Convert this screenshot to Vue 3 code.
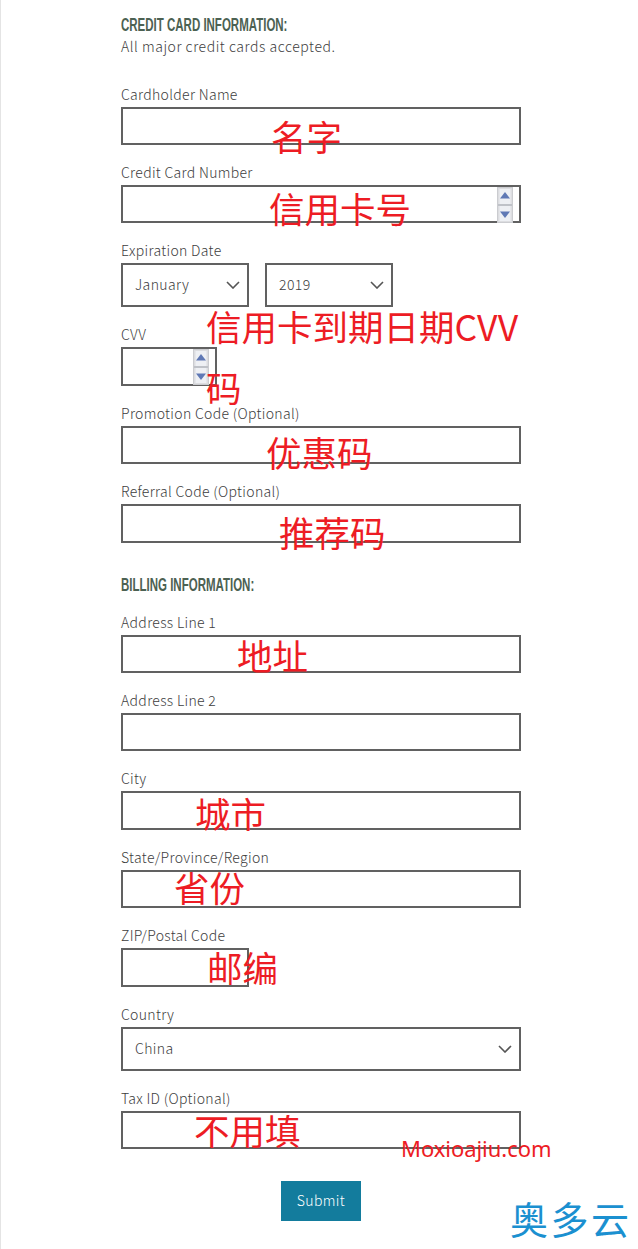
<script setup>
const months = ['January']
const notes = [
  { text: '名字', x: 270, y: 118 },
  { text: '信用卡号', x: 268, y: 190 },
  { text: '信用卡到期日期CVV', x: 205, y: 308 },
  { text: '码', x: 205, y: 369 },
  { text: '优惠码', x: 265, y: 434 },
  { text: '推荐码', x: 278, y: 514 },
  { text: '地址', x: 236, y: 637 },
  { text: '城市', x: 194, y: 795 },
  { text: '省份', x: 173, y: 869 },
  { text: '邮编', x: 206, y: 949 },
  { text: '不用填', x: 193, y: 1112 },
]
</script>

<template>
  <div class="page">
    <form class="form" @submit.prevent>
      <h2 class="heading">Credit Card Information:</h2>
      <p class="hint">All major credit cards accepted.</p>

      <div class="field">
        <label>Cardholder Name</label>
        <input type="text" />
      </div>
      <div class="field">
        <label>Credit Card Number</label>
        <div class="spin-wrap">
          <input type="text" />
          <svg class="spinner" viewBox="0 0 16 36">
            <rect x="0.5" y="0.5" width="15" height="35" fill="#dcdde0" stroke="#cbccd0" />
            <rect x="2.5" y="2" width="11" height="15" fill="#eef0f4" />
            <rect x="2.5" y="19" width="11" height="15" fill="#eef0f4" />
            <rect x="1" y="17" width="14" height="2" fill="#bfc2c8" />
            <path d="M8 5 L13 11.5 H3 Z" fill="#6079b5" />
            <path d="M8 31 L13 24.5 H3 Z" fill="#6079b5" />
          </svg>
        </div>
      </div>
      <div class="field">
        <label>Expiration Date</label>
        <div class="date-row">
          <div class="select-wrap small">
            <select>
              <option v-for="m in months" :key="m">{{ m }}</option>
            </select>
            <svg class="chevron" viewBox="0 0 14 8"><path d="M1 1 L7 7 L13 1" /></svg>
          </div>
          <div class="select-wrap small">
            <select>
              <option>2019</option>
            </select>
            <svg class="chevron" viewBox="0 0 14 8"><path d="M1 1 L7 7 L13 1" /></svg>
          </div>
        </div>
      </div>
      <div class="field">
        <label>CVV</label>
        <div class="spin-wrap cvv">
          <input type="text" />
          <svg class="spinner" viewBox="0 0 16 36">
            <rect x="0.5" y="0.5" width="15" height="35" fill="#dcdde0" stroke="#cbccd0" />
            <rect x="2.5" y="2" width="11" height="15" fill="#eef0f4" />
            <rect x="2.5" y="19" width="11" height="15" fill="#eef0f4" />
            <rect x="1" y="17" width="14" height="2" fill="#bfc2c8" />
            <path d="M8 5 L13 11.5 H3 Z" fill="#6079b5" />
            <path d="M8 31 L13 24.5 H3 Z" fill="#6079b5" />
          </svg>
        </div>
      </div>
      <div class="field">
        <label>Promotion Code (Optional)</label>
        <input type="text" />
      </div>
      <div class="field">
        <label>Referral Code (Optional)</label>
        <input type="text" />
      </div>

      <h2 class="heading second">Billing Information:</h2>

      <div class="field">
        <label>Address Line 1</label>
        <input type="text" />
      </div>
      <div class="field">
        <label>Address Line 2</label>
        <input type="text" />
      </div>
      <div class="field">
        <label>City</label>
        <input type="text" />
      </div>
      <div class="field">
        <label>State/Province/Region</label>
        <input type="text" />
      </div>
      <div class="field">
        <label>ZIP/Postal Code</label>
        <input class="zip" type="text" />
      </div>
      <div class="field">
        <label>Country</label>
        <div class="select-wrap">
          <select>
            <option>China</option>
          </select>
          <svg class="chevron" viewBox="0 0 14 8"><path d="M1 1 L7 7 L13 1" /></svg>
        </div>
      </div>
      <div class="field">
        <label>Tax ID (Optional)</label>
        <input type="text" />
      </div>

      <div class="actions">
        <button type="submit">Submit</button>
      </div>
    </form>

    <span
      v-for="n in notes"
      :key="n.text"
      class="note"
      :style="{ left: n.x + 'px', top: n.y + 'px' }"
    >{{ n.text }}</span>
    <span class="mark-site">Moxioajiu.com</span>
    <span class="mark-logo">奥多云</span>
  </div>
</template>

<style>
html,
body {
  margin: 0;
  background: #fff;
}
</style>

<style scoped>
.page {
  position: relative;
  height: 1249px;
  overflow: hidden;
  box-sizing: border-box;
  border-left: 1px solid #e4e4e4;
  font-family: "Noto Sans CJK SC", "Noto Sans", sans-serif;
  font-weight: 300;
  color: #3d3d3d;
}

.form {
  width: 400px;
  margin-left: 120px;
  padding-top: 15px;
}

.heading {
  margin: 0;
  font-family: "Liberation Sans", sans-serif;
  font-size: 19px;
  line-height: 20px;
  font-weight: 700;
  text-transform: uppercase;
  white-space: nowrap;
  color: #4c6152;
  transform: scaleX(0.605);
  transform-origin: left;
}

.heading.second {
  margin-top: 32.4px;
  margin-bottom: 16.75px;
}

.hint {
  margin: 0 0 26.6px;
  font-size: 14px;
  line-height: 22px;
  letter-spacing: 0.55px;
}

.field {
  margin-bottom: 17px;
}

.field label {
  display: block;
  height: 23px;
  font-size: 14px;
  line-height: 20px;
  letter-spacing: 0.32px;
}

input {
  display: block;
  box-sizing: border-box;
  width: 100%;
  height: 38.4px;
  border: 2px solid #616161;
  background: #fff;
  outline: none;
}

input.zip {
  width: 128px;
}

.spin-wrap {
  position: relative;
}

.spin-wrap.cvv {
  width: 96px;
}

.spinner {
  position: absolute;
  right: 8px;
  top: 2px;
  width: 16px;
  height: 36px;
}

.date-row {
  display: flex;
  gap: 16px;
}

.select-wrap {
  position: relative;
}

.select-wrap.small {
  width: 128px;
}

select {
  display: block;
  box-sizing: border-box;
  width: 100%;
  height: 44px;
  padding: 0 0 2px 12px;
  appearance: none;
  border: 2px solid #616161;
  border-radius: 0;
  background: #fff;
  font-family: inherit;
  font-weight: 300;
  font-size: 14px;
  letter-spacing: 0.4px;
  color: #3d3d3d;
  outline: none;
}

.chevron {
  position: absolute;
  right: 9px;
  top: 18px;
  width: 14px;
  height: 8px;
  fill: none;
  stroke: #555;
  stroke-width: 1.6;
  pointer-events: none;
}

.actions {
  display: flex;
  justify-content: center;
  padding-top: 15px;
}

button {
  width: 80px;
  height: 40px;
  padding: 0 0 2px;
  border: none;
  background: #137c9d;
  color: #fff;
  font-family: inherit;
  font-weight: 300;
  font-size: 14px;
  letter-spacing: 0.4px;
}

.note {
  position: absolute;
  font-size: 35.5px;
  line-height: 36px;
  font-weight: 400;
  color: #ed1c24;
  white-space: nowrap;
}

.mark-site {
  position: absolute;
  left: 400px;
  top: 1133px;
  font-family: "Noto Sans", sans-serif;
  font-weight: 400;
  font-size: 22px;
  line-height: 30px;
  letter-spacing: -0.05px;
  color: #ed1c24;
}

.mark-logo {
  position: absolute;
  left: 509px;
  top: 1194px;
  font-size: 38px;
  line-height: 48px;
  font-weight: 400;
  letter-spacing: 2.5px;
  color: #1b90d0;
}
</style>
